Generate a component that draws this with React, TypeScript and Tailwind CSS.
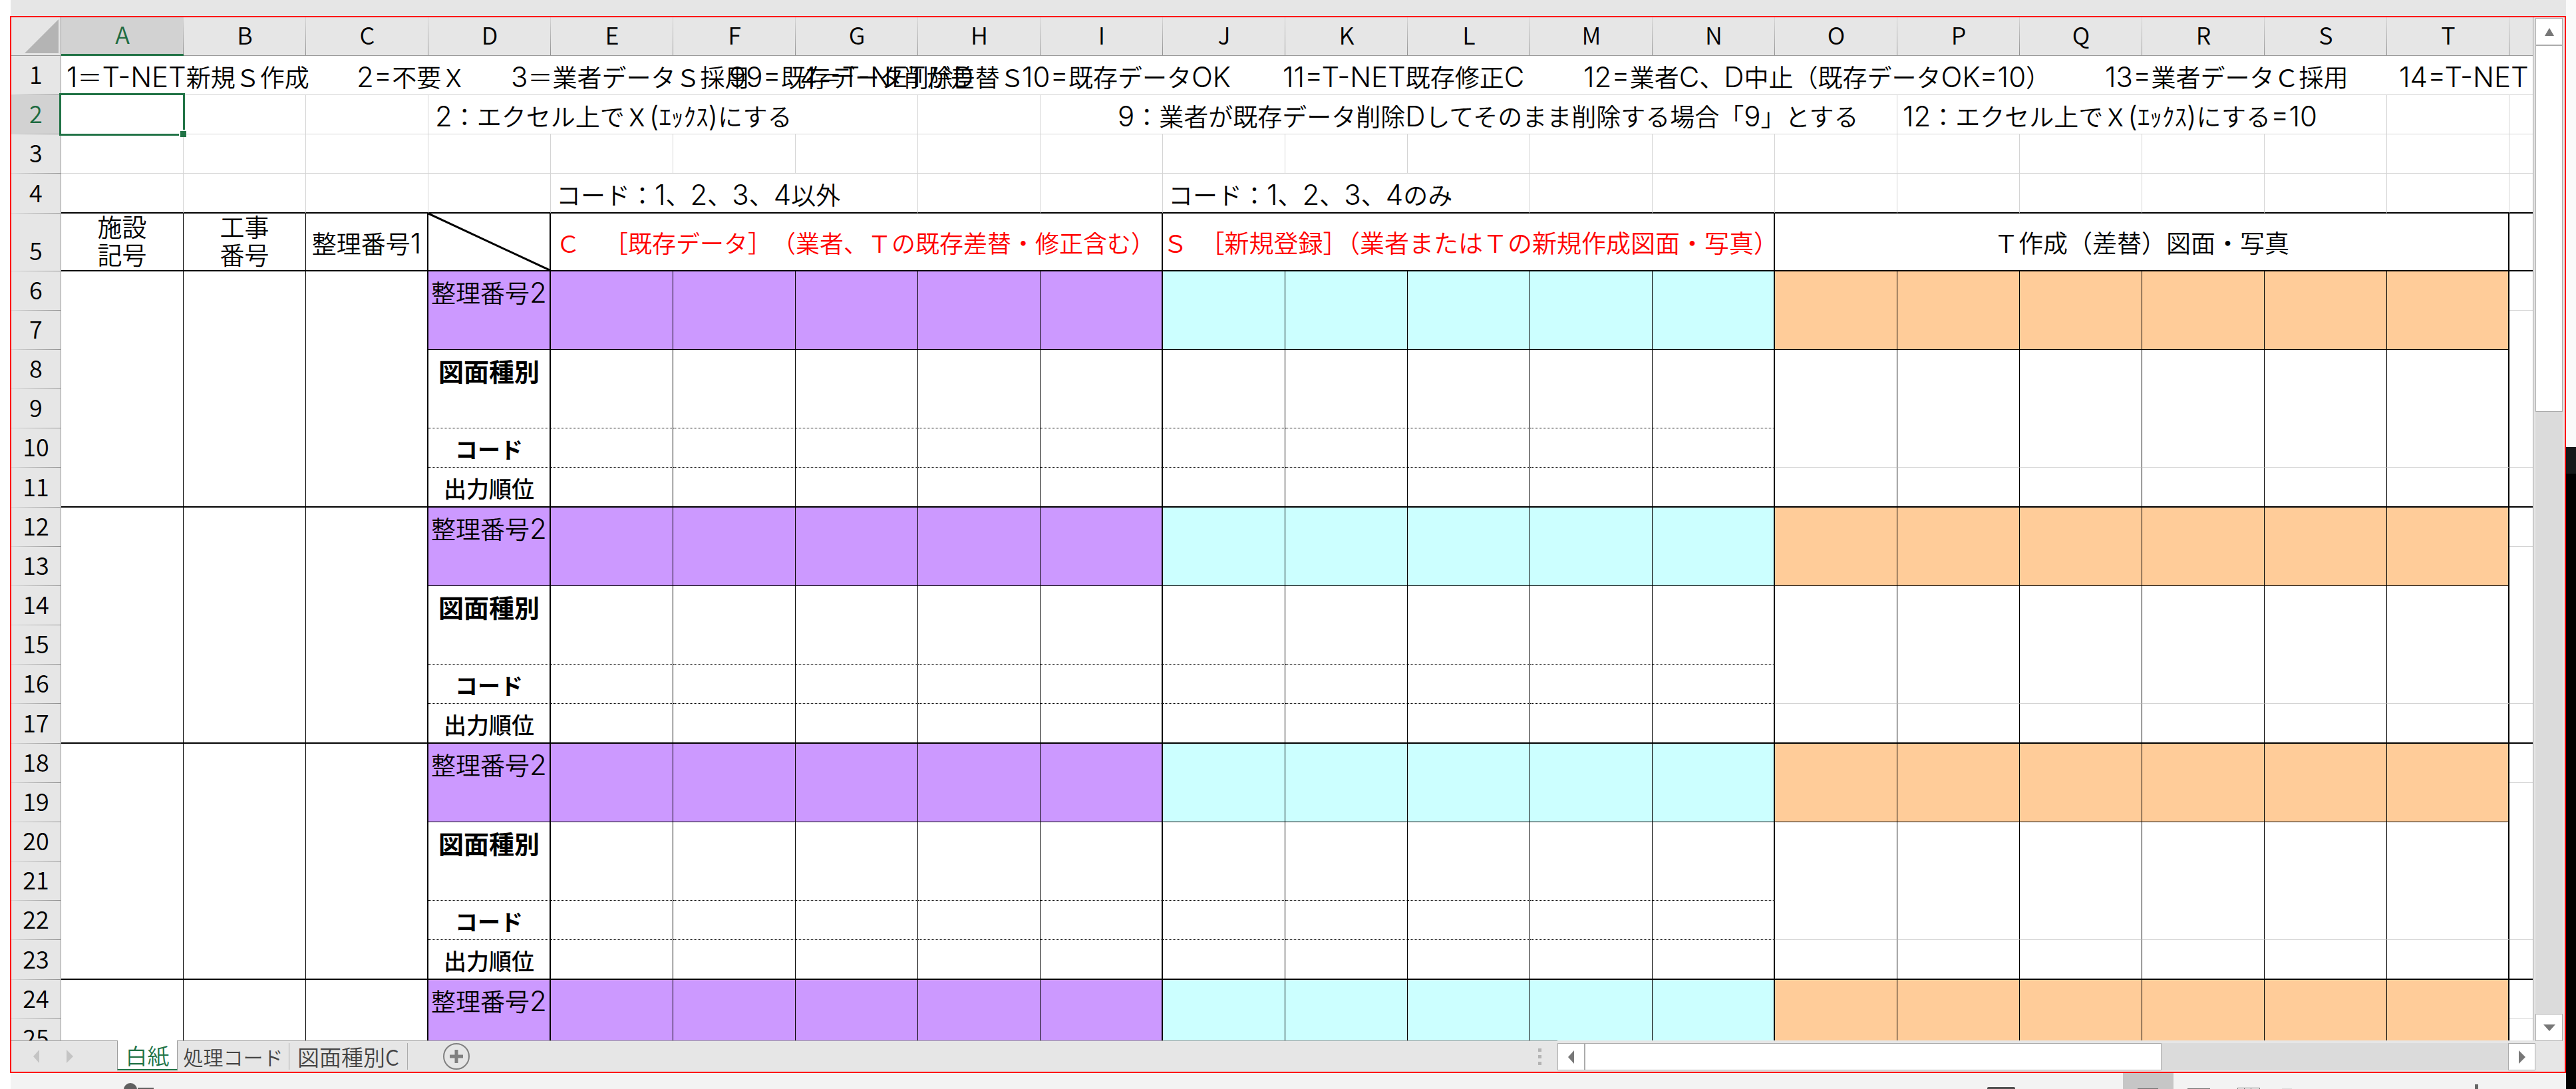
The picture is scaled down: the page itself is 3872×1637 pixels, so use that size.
import { Fragment, type ReactNode } from "react";

const LETTERS = "ABCDEFGHIJKLMNOPQRST".split("");

/* Latin runs are set one step larger than the kanji beside them. */
function Mixed({ text }: { text: string }) {
  return (
    <>
      {text.split(/([!-~]+)/).map((part, i) =>
        i % 2 ? (
          <span key={i} className="text-[42px]">
            {part}
          </span>
        ) : (
          <Fragment key={i}>{part}</Fragment>
        ),
      )}
    </>
  );
}

/* Text that runs on over the empty cells to its right. */
function Spill({ text, pad = "pl-2" }: { text: string; pad?: string }) {
  return (
    <div className={`relative w-0 pb-[3px] whitespace-nowrap leading-[43px] ${pad}`}>
      <Mixed text={text} />
    </div>
  );
}

function RowHead({ n, h = "h-[59px]", active = false }: { n: number; h?: string; active?: boolean }) {
  return (
    <th
      scope="row"
      className={`${h} border-r border-[#9b9b9b] bg-[linear-gradient(to_right,#d6d6d6,#8f8f8f)] bg-[length:100%_1px] bg-bottom bg-no-repeat p-0 pb-[13px] text-center align-bottom font-["Noto_Sans_CJK_JP",sans-serif] text-[36px] leading-[40px] font-[350] ${
        active ? "bg-[#d2d2d2] text-[#1e6b41]" : "bg-[#e6e6e6] text-black"
      }`}
    >
      {n}
    </th>
  );
}

const GRID = "border-b border-[#d4d4d4] p-0";

type Note = { text: string; pad?: string };

function NoteRow({
  n,
  notes,
  hidden,
  h,
  thick = false,
}: {
  n: number;
  notes: Record<string, Note>;
  hidden: string;
  h?: string;
  thick?: boolean;
}) {
  const bottom = thick ? "border-b-2 border-b-black p-0" : GRID;
  return (
    <tr>
      <RowHead n={n} h={h} active={n === 2} />
      {LETTERS.map((c) => (
        <td
          key={c}
          className={`${bottom} align-bottom ${hidden.includes(c) ? "" : "border-r border-r-[#d4d4d4]"} ${
            n === 2 && c === "A" ? "relative" : ""
          }`}
        >
          {notes[c] && <Spill {...notes[c]} />}
          {n === 2 && c === "A" && (
            <div className="absolute -top-[3px] -right-[3px] -bottom-[3px] -left-[3px] border-3 border-[#217346]">
              <div className="absolute -right-[5px] -bottom-[5px] size-[11px] border-t-2 border-l-2 border-white bg-[#217346]" />
            </div>
          )}
        </td>
      ))}
      <td className={bottom} />
    </tr>
  );
}

const FILLS: { cols: string; fill: string }[] = [
  { cols: "EFGHI", fill: "bg-[#cc99ff]" },
  { cols: "JKLMN", fill: "bg-[#ccffff]" },
  { cols: "OPQRST", fill: "bg-[#ffcc99]" },
];

function edge(c: string) {
  return "DINT".includes(c) ? "border-r-2" : "border-r";
}

function cells(make: (c: string, fill: string) => ReactNode) {
  return FILLS.flatMap(({ cols, fill }) => cols.split("").map((c) => make(c, fill)));
}

function Block({ start }: { start: number }) {
  return (
    <>
      <tr>
        <RowHead n={start} />
        {["A", "B", "C"].map((c) => (
          <td
            key={c}
            rowSpan={6}
            className={`border-b-2 border-black p-0 ${c === "C" ? "border-r-2" : "border-r"}`}
          />
        ))}
        <td
          rowSpan={2}
          className="border-r-2 border-b border-black bg-[#cc99ff] p-0 pt-[10px] text-center align-top leading-[43px] whitespace-nowrap"
        >
          <Mixed text="整理番号2" />
        </td>
        {cells((c, fill) => (
          <td key={c} rowSpan={2} className={`border-b border-black p-0 ${edge(c)} ${fill}`} />
        ))}
        <td className={GRID} />
      </tr>
      <tr>
        <RowHead n={start + 1} />
        <td rowSpan={4} className={GRID} />
      </tr>
      <tr>
        <RowHead n={start + 2} />
        <td
          rowSpan={2}
          className="border-r-2 border-b border-black border-b-black p-0 pt-3 text-center align-top text-[38px] leading-[43px] font-semibold [border-bottom-style:dotted]"
        >
          図面種別
        </td>
        {cells((c) =>
          "OPQRST".includes(c) ? (
            <td key={c} rowSpan={3} className={`border-b border-black border-b-[#d4d4d4] p-0 ${edge(c)}`} />
          ) : (
            <td
              key={c}
              rowSpan={2}
              className={`border-b border-black p-0 [border-bottom-style:dotted] ${edge(c)}`}
            />
          ),
        )}
      </tr>
      <tr>
        <RowHead n={start + 3} />
      </tr>
      <tr>
        <RowHead n={start + 4} />
        <td className="border-r-2 border-b border-black p-0 pt-2 text-center align-middle text-[34px] leading-[40px] font-semibold [border-bottom-style:dotted]">
          コード
        </td>
        {cells((c) =>
          "OPQRST".includes(c) ? null : (
            <td key={c} className={`border-b border-black p-0 [border-bottom-style:dotted] ${edge(c)}`} />
          ),
        )}
      </tr>
      <tr>
        <RowHead n={start + 5} h="h-[60px]" />
        <td className="border-r-2 border-b-2 border-black p-0 pt-2 text-center align-middle text-[34px] leading-[40px] font-medium">
          出力順位
        </td>
        {cells((c) => (
          <td key={c} className={`border-b-2 border-black p-0 ${edge(c)}`} />
        ))}
        <td className="border-b-2 border-black p-0" />
      </tr>
    </>
  );
}

function Sheet() {
  return (
    <table className='w-full table-fixed border-separate border-spacing-0 bg-white font-[Inter,"Noto_Sans_CJK_JP",sans-serif] text-[37px] font-[350] text-black'>
      <colgroup>
        <col className="w-[75px]" />
        {LETTERS.map((c) => (
          <col key={c} className="w-[184px]" />
        ))}
        <col />
      </colgroup>
      <thead>
        <tr>
          <th className="h-[58px] border-r border-b border-[#9b9b9b] bg-[#e6e6e6] p-0">
            <svg viewBox="0 0 74 57" className="h-[57px] w-[74px]" aria-hidden="true">
              <path d="M20 54H71V3Z" fill="#b4b4b4" />
            </svg>
          </th>
          {LETTERS.map((c) => (
            <th
              key={c}
              scope="col"
              className={`bg-[linear-gradient(to_bottom,#d6d6d6,#8f8f8f)] bg-[length:1px_100%] bg-right bg-no-repeat p-0 pb-2 text-center align-middle font-["Noto_Sans_CJK_JP",sans-serif] text-[36px] leading-[40px] font-[350] ${
                c === "A"
                  ? "border-b-3 border-[#217346] bg-[#d2d2d2] text-[#1e6b41]"
                  : "border-b border-[#9b9b9b] bg-[#e6e6e6]"
              }`}
            >
              {c}
            </th>
          ))}
          <th className="border-b border-[#9b9b9b] bg-[#e6e6e6] p-0" />
        </tr>
      </thead>
      <tbody>
        <NoteRow
          n={1}
          hidden="ABCDEFGHIJKLMNOPQRST"
          notes={{
            A: { text: "1＝T-NET新規Ｓ作成" },
            C: { text: "2=不要Ｘ", pad: "pl-[76px]" },
            D: { text: "3＝業者データＳ採用", pad: "pl-[124px]" },
            F: { text: "99=既存データ削除D", pad: "pl-[84px]" },
            G: { text: "4＝T-NETが差替Ｓ", pad: "pl-[6px]" },
            H: { text: "10=既存データOK", pad: "pl-[156px]" },
            J: { text: "11=T-NET既存修正C", pad: "pl-[180px]" },
            M: { text: "12=業者C、D中止（既存データOK=10）", pad: "pl-[80px]" },
            Q: { text: "13=業者データＣ採用", pad: "pl-[128px]" },
            T: { text: "14=T-NET", pad: "pl-[18px]" },
          }}
        />
        <NoteRow
          n={2}
          hidden="DEFIJKLMNPQR"
          notes={{
            D: { text: "2：エクセル上でＸ(ｴｯｸｽ)にする", pad: "pl-[10px]" },
            I: { text: "9：業者が既存データ削除Dしてそのまま削除する場合「9」とする", pad: "pl-[116px]" },
            P: { text: "12：エクセル上でＸ(ｴｯｸｽ)にする=10" },
          }}
        />
        <NoteRow n={3} hidden="" notes={{}} />
        <NoteRow
          n={4}
          h="h-[60px]"
          thick
          hidden="EFJK"
          notes={{
            E: { text: "コード：1、2、3、4以外" },
            J: { text: "コード：1、2、3、4のみ" },
          }}
        />
        <tr>
          <RowHead n={5} h="h-[87px]" />
          {["施設 記号", "工事 番号"].map((t) => (
            <td key={t} className="border-r border-b-2 border-black px-12 py-0 text-center leading-[42px]">
              {t}
            </td>
          ))}
          <td className="border-r-2 border-b-2 border-black p-0 pt-1 text-center whitespace-nowrap">
            <Mixed text="整理番号1" />
          </td>
          <td className="border-r-2 border-b-2 border-black p-0">
            <svg viewBox="0 0 182 85" preserveAspectRatio="none" className="block h-[85px] w-full" aria-hidden="true">
              <path d="M0 0L182 85" stroke="#000" strokeWidth="3" />
            </svg>
          </td>
          <td
            colSpan={5}
            className="border-r-2 border-b-2 border-black p-0 pt-1.5 pl-2 text-left text-[36px] whitespace-nowrap text-[#ff0000] [text-spacing-trim:space-all]"
          >
            Ｃ　［既存データ］（業者、Ｔの既存差替・修正含む）
          </td>
          <td
            colSpan={5}
            className="border-r-2 border-b-2 border-black p-0 pt-1.5 text-left whitespace-nowrap text-[#ff0000]"
          >
            Ｓ　［新規登録］（業者またはＴの新規作成図面・写真）
          </td>
          <td colSpan={6} className="border-r-2 border-b-2 border-black p-0 pt-1.5 text-center whitespace-nowrap">
            Ｔ作成（差替）図面・写真
          </td>
          <td className="border-b-2 border-black p-0" />
        </tr>
        {[6, 12, 18, 24].map((n) => (
          <Block key={n} start={n} />
        ))}
      </tbody>
    </table>
  );
}

function Arrow({ d, fill = "#777777" }: { d: string; fill?: string }) {
  return (
    <svg viewBox="0 0 20 20" className="size-5" aria-hidden="true">
      <path d={d} fill={fill} />
    </svg>
  );
}

const UP = "M10 4L17 16H3Z";
const DOWN = "M10 15L19 5H1Z";
const LEFT = "M5 10L14 0V20Z";
const RIGHT = "M15 10L5 0V20Z";
const SCROLL_BTN = "flex shrink-0 items-center justify-center border border-[#ababab] bg-white";

export default function App() {
  return (
    <div className="flex h-screen overflow-hidden bg-white pl-[15px]">
      <div className="flex min-w-0 flex-1 flex-col">
        <div className="ml-px h-6 shrink-0 bg-[#e6e6e6]" />
        <main className="flex min-h-0 flex-1 flex-col border-2 border-[#ff0000] bg-[#e6e6e6]">
          <div className="flex min-h-0 flex-1">
            <div className="min-w-0 flex-1 overflow-hidden border-r border-[#9b9b9b]">
              <Sheet />
            </div>
            <div className="mx-[3px] mt-px -mb-px flex w-[41px] shrink-0 flex-col bg-[#dbdbdb]">
              <button type="button" aria-label="上へスクロール" className={`${SCROLL_BTN} h-[41px]`}>
                <Arrow d={UP} />
              </button>
              <div className="h-[551px] shrink-0 border border-[#ababab] bg-white" />
              <div className="flex-1" />
              <button type="button" aria-label="下へスクロール" className={`${SCROLL_BTN} h-[41px]`}>
                <Arrow d={DOWN} />
              </button>
            </div>
          </div>
          <div className='flex h-[47px] shrink-0 font-["Noto_Sans_CJK_JP",sans-serif] text-[33px] leading-[40px] font-[350] text-[#444444]'>
            <div className="flex min-w-0 flex-1 border-t border-[#9b9b9b]">
              <div className="flex w-[159px] items-center gap-[30px] pl-7">
                <button type="button" aria-label="前のシート">
                  <Arrow d={LEFT} fill="#c4c4c4" />
                </button>
                <button type="button" aria-label="次のシート">
                  <Arrow d={RIGHT} fill="#c4c4c4" />
                </button>
              </div>
              <button
                type="button"
                className="-mt-px mb-[2px] w-[91px] border-x border-b-2 border-x-[#9b9b9b] border-b-[#217346] bg-white text-[#217346]"
              >
                白紙
              </button>
              <button type="button" className="my-[3px] w-[168px] border-r border-[#ababab] text-[30px]">
                処理コード
              </button>
              <button type="button" className="my-[3px] w-[178px] border-r border-[#ababab]">
                図面種別C
              </button>
              <button type="button" aria-label="新しいシート" className="ml-[52px]">
                <svg viewBox="0 0 42 42" className="size-[42px]" aria-hidden="true">
                  <circle cx="21" cy="21" r="19" fill="none" stroke="#808080" strokeWidth="2" />
                  <path d="M21 11V31M11 21H31" stroke="#808080" strokeWidth="5" />
                </svg>
              </button>
              <div className="ml-auto flex flex-col justify-center gap-[5px] pr-6">
                <i className="size-[5px] bg-[#b4b4b4]" />
                <i className="size-[5px] bg-[#b4b4b4]" />
                <i className="size-[5px] bg-[#b4b4b4]" />
              </div>
            </div>
            <div className="mt-1 mr-11 mb-[2px] flex w-[1470px] shrink-0 bg-[#dbdbdb]">
              <button type="button" aria-label="左へスクロール" className={`${SCROLL_BTN} w-[41px]`}>
                <Arrow d={LEFT} />
              </button>
              <div className="w-[867px] border border-[#ababab] bg-white" />
              <div className="flex-1" />
              <button type="button" aria-label="右へスクロール" className={`${SCROLL_BTN} w-[41px]`}>
                <Arrow d={RIGHT} />
              </button>
            </div>
          </div>
        </main>
        <footer className="mr-px ml-px flex h-6 shrink-0 items-end justify-between overflow-hidden bg-[#f3f3f3]">
          <svg viewBox="0 0 220 24" className="h-6 w-[220px]" aria-hidden="true">
            <circle cx="180" cy="25" r="10" fill="#606060" />
            <path d="M191 22H215V24H191Z" fill="#606060" />
          </svg>
          <svg viewBox="0 0 880 24" className="h-6 w-[880px]" aria-hidden="true">
            <path d="M11 24V23Q11 21 13 21H51Q53 21 53 23V24Z" fill="#505050" />
            <path d="M215 0H291V24H215Z" fill="#c6c6c6" />
            <path d="M237 23H268V24H237ZM312 23H346V24H312Z" fill="#707070" />
            <path d="M387.500 24V22.500H420.500V24M397.500 22V24M407.500 22V24" fill="none" stroke="#707070" />
            <path d="M454 23H469V24H454Z" fill="#dddddd" />
            <path d="M744 17H749V24H744Z" fill="#666666" />
          </svg>
        </footer>
      </div>
      <div className="flex w-[15px] shrink-0 flex-col">
        <div className="h-[672px] bg-[#fafafa]" />
        <div className="h-10 bg-[#161819]" />
        <div className="flex-1 bg-black" />
      </div>
    </div>
  );
}
